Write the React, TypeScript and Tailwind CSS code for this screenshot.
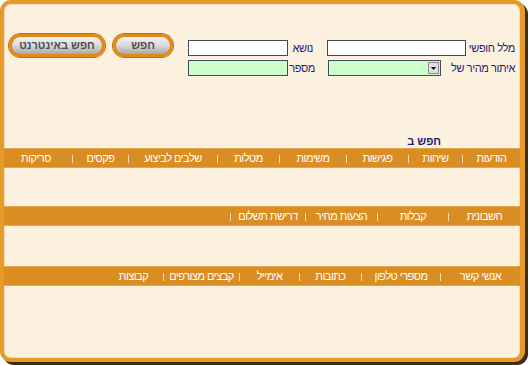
import type { ReactNode } from "react";

// Each bar is a row of table-like cells: [label, cell width]; a thin light rule
// sits between cells.
const MESSAGE_BAR: [string, number][] = [
  ["הודעות", 57],
  ["שיחות", 53],
  ["פגישות", 61],
  ["משימות", 66],
  ["מטלות", 61],
  ["שלבים לביצוע", 88],
  ["פקסים", 55],
  ["סריקות", 72],
];

const BILLING_BAR: [string, number][] = [
  ["חשבונית", 71],
  ["קבלות", 70],
  ["הצעות מחיר", 71],
  ["דרישת תשלום", 74],
];

const CONTACT_BAR: [string, number][] = [
  ["אנשי קשר", 79],
  ["מספרי טלפון", 78],
  ["כתובות", 61],
  ["אימייל", 59],
  ["קבצים מצורפים", 75],
  ["קבוצות", 59],
];

function Rule() {
  return <span className="mt-[2px] h-[8px] w-px shrink-0 bg-[#f7dbb2]" aria-hidden="true" />;
}

function NavBar({ items, trailingRule = false }: { items: [string, number][]; trailingRule?: boolean }) {
  return (
    <div className="flex h-[20px] items-center border-y border-[#e6a44c] bg-[#da8d23] text-[11px] leading-none tracking-[-0.5px] text-white">
      {items.map(([label, width], i) => (
        <div key={label} className="flex items-center">
          {i > 0 && <Rule />}
          <span className="block shrink-0 text-center whitespace-nowrap" style={{ width }}>
            {label}
          </span>
        </div>
      ))}
      {trailingRule && <Rule />}
    </div>
  );
}

function PillButton({ width, children }: { width: number; children: ReactNode }) {
  return (
    <button
      type="button"
      className="h-[23px] shrink-0 rounded-full border-[3px] border-[#e2891a] bg-gradient-to-b from-[#f4f4f4] via-[#d9d9d9] to-[#a9a9a9] text-[11px] leading-none font-bold text-[#4d4d4d] shadow-[0_0_0_1px_#c46f0c]"
      style={{ width }}
    >
      {children}
    </button>
  );
}

// Label cell of the search table; `pad` is the space between its right edge and the text.
function Label({ width, pad, children }: { width: number; pad: number; children: ReactNode }) {
  return (
    <div
      className="flex h-[16px] shrink-0 items-center text-[11px] leading-none tracking-[-0.4px] whitespace-nowrap text-[#1d1d72]"
      style={{ width, paddingRight: pad }}
    >
      {children}
    </div>
  );
}

function TextField({ width, green = false }: { width: number; green?: boolean }) {
  return (
    <input
      type="text"
      className={`h-[16px] shrink-0 border border-[#3e4a5c] outline-none ${green ? "bg-[#ccffcc]" : "bg-white"}`}
      style={{ width }}
    />
  );
}

export default function App() {
  return (
    <div className="h-[365px] w-[528px] bg-white font-['Liberation_Sans',Arial,sans-serif]">
      <div
        dir="rtl"
        className="flex h-[362px] w-[525px] flex-col overflow-hidden rounded-[11px] border-t-[4px] border-r-[5px] border-b-[4px] border-l-[4px] border-[#e69a27] bg-[#fcf0df] shadow-[3px_3px_0_0_#3d2b12,inset_0_0_0_1px_#f3dcbc]"
      >
        {/* search form + buttons */}
        <div className="flex items-start pt-[30px]">
          <div className="mt-[6px] flex flex-col gap-[4px]">
            <div className="flex items-center">
              <Label width={54} pad={5}>מלל חופשי</Label>
              <TextField width={139} />
              <Label width={39} pad={14}>נושא</Label>
              <TextField width={100} />
            </div>
            <div className="flex items-center">
              <Label width={79} pad={5}>איתור מהיר של</Label>
              <div className="flex h-[16px] w-[113px] shrink-0 items-center justify-start border border-[#3e4a5c] bg-[#ccffcc]">
                <span className="mr-[1px] flex h-[12px] w-[11px] items-center justify-center border border-[#8a8a8a] bg-[#e2e0da]">
                  <svg width="5" height="3" viewBox="0 0 5 3">
                    <path d="M0 0h5L2.5 3z" fill="#000" />
                  </svg>
                </span>
              </div>
              <Label width={40} pad={13}>מספר</Label>
              <TextField width={100} green />
            </div>
          </div>
          <div className="mr-[15px] flex gap-[8px]">
            <PillButton width={60}>חפש</PillButton>
            <PillButton width={96}>חפש באינטרנט</PillButton>
          </div>
        </div>

        <div className="mt-[58px] h-[14px] pr-[79px] text-[11px] leading-[14px] font-bold text-[#1d1d72]">
          חפש ב
        </div>

        <NavBar items={MESSAGE_BAR} />
        <div className="mt-[38px]">
          <NavBar items={BILLING_BAR} trailingRule />
        </div>
        <div className="mt-[40px]">
          <NavBar items={CONTACT_BAR} />
        </div>
      </div>
    </div>
  );
}
